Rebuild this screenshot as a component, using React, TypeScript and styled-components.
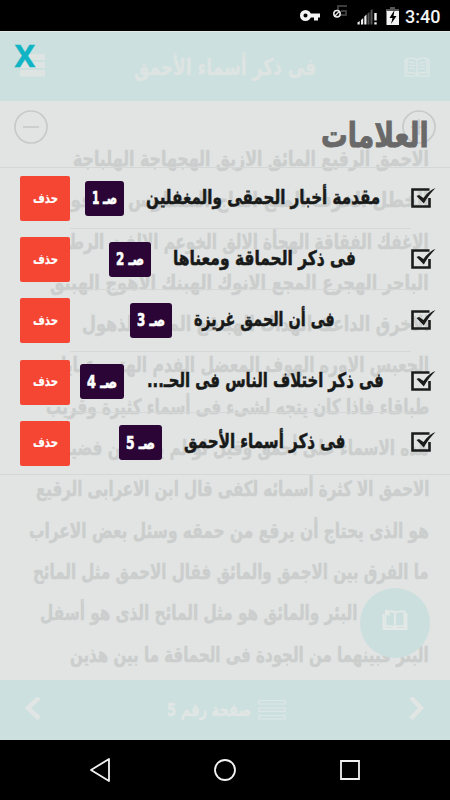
import React, { useLayoutEffect, useRef } from "react";
import styled, { createGlobalStyle } from "styled-components";

const GlobalStyle = createGlobalStyle`
  * { box-sizing: border-box; }
  body { margin: 0; background: #000; }
`;

const arabic = `"DejaVu Sans Condensed", "DejaVu Sans", sans-serif`;

const Screen = styled.div`
  position: relative;
  display: flex;
  flex-direction: column;
  width: 450px;
  height: 800px;
  overflow: hidden;
  background: #000;
  font-family: ${arabic};
  font-weight: 700;
`;

const StatusBar = styled.header`
  display: flex;
  justify-content: flex-end;
  height: 31px;
  flex: none;
`;

const Clock = styled.span`
  width: 35px;
  margin: 5px 10px 0 3px;
  color: #f4f4f4;
  font: 500 18px/23px Roboto, sans-serif;
  white-space: nowrap;
`;

const AppBar = styled.div`
  display: flex;
  align-items: center;
  justify-content: space-between;
  flex: none;
  height: 70px;
  padding: 0 20px;
  border-top: 1px solid #dfe9e8;
  background: #cce0df;
`;

const Article = styled.main`
  direction: rtl;
  flex: none;
  height: 579px;
  padding: 38px 21px 0;
  overflow: hidden;
  background: #e1e4e3;
`;

const Line = styled.div<{ $indent?: number }>`
  height: 41.3px;
  padding-right: ${(p) => p.$indent ?? 0}px;
`;

const PagerBar = styled.footer`
  display: flex;
  align-items: center;
  justify-content: space-between;
  flex: none;
  height: 60px;
  padding: 0 25px;
  background: #cce0df;
`;

const PageLabel = styled.div`
  display: flex;
  align-items: center;
  gap: 7px;
  margin-left: 2px;
`;

const NavBar = styled.nav`
  display: flex;
  align-items: center;
  justify-content: space-between;
  height: 60px;
  padding: 0 89px;
`;

const TextBox = styled.div<{ $w: number; $size: number; $line: number; $color: string; $heavy: number }>`
  direction: rtl;
  flex: none;
  width: ${(p) => p.$w}px;
  height: ${(p) => p.$line}px;
  color: ${(p) => p.$color};
  font-size: ${(p) => p.$size}px;
  line-height: ${(p) => p.$line}px;
  white-space: nowrap;
  -webkit-text-stroke: ${(p) => p.$heavy}px ${(p) => p.$color};
`;

const Stretch = styled.span`
  display: inline-block;
  transform-origin: right center;
`;

type FitProps = {
  w: number;
  size: number;
  line: number;
  color: string;
  heavy?: number;
  children: React.ReactNode;
};

/* Justifies a single line of joined script to the width of its box. */
function Fit({ w, size, line, color, heavy = 0.5, children }: FitProps) {
  const ref = useRef<HTMLSpanElement>(null);
  useLayoutEffect(() => {
    const el = ref.current;
    if (el && el.offsetWidth) el.style.transform = `scaleX(${w / el.offsetWidth})`;
  }, [w, children]);
  return (
    <TextBox $w={w} $size={size} $line={line} $color={color} $heavy={heavy}>
      <Stretch ref={ref}>{children}</Stretch>
    </TextBox>
  );
}

const FloatingButton = styled.div`
  position: absolute;
  left: 360px;
  top: 588px;
  display: grid;
  place-items: center;
  width: 70px;
  height: 70px;
  padding-bottom: 6px;
  border-radius: 50%;
  background: #cbe0de;
`;

const ZoomControls = styled.div`
  position: absolute;
  top: 110px;
  left: 14px;
  right: 14px;
  display: flex;
  justify-content: space-between;
`;

const Panel = styled.section`
  position: absolute;
  top: 32px;
  left: 0;
  right: 0;
  height: 708px;
`;

const Close = styled.div`
  height: 70px;
  padding: 1px 0 0 14.5px;
  color: #10b4c4;
  font: 700 31px/44px "Noto Sans", sans-serif;
  -webkit-text-stroke: 0.4px #10b4c4;
`;

const Heading = styled.div`
  display: flex;
  justify-content: flex-end;
  height: 66px;
  padding: 12px 21px 0 0;
  border-bottom: 1px solid #d3d7d6;
`;

const List = styled.div`
  direction: rtl;
  border-bottom: 1px solid #d3d7d6;
`;

const Row = styled.div`
  display: flex;
  align-items: center;
  height: 61.2px;
  padding: 0 14px 0 20px;
`;

const Caption = styled.div<{ $start: number; $divider: boolean }>`
  display: flex;
  align-items: center;
  align-self: stretch;
  flex: 1;
  padding: 0 ${(p) => p.$start}px 3px 0;
  border-bottom: 1px solid ${(p) => (p.$divider ? "#d5d8d7" : "transparent")};
`;

const Badge = styled.div<{ $w: number; $gap: number }>`
  display: grid;
  place-items: center;
  width: ${(p) => p.$w}px;
  height: 35px;
  margin: 3px ${(p) => p.$gap}px 0 0;
  border-radius: 3px;
  background: #2a0536;
`;

const Delete = styled.div`
  display: grid;
  place-items: center;
  width: 50px;
  height: 45px;
  padding-bottom: 2px;
  border-radius: 2px;
  background: #f54634;
`;

const lines = [
  { t: "الاحمق الرقيع المائق الازبق الهجهاجة الهلباجة", l: 73 },
  { t: "الخطل الخرف الملغ الماج المسلوس المأفون", l: 56 },
  { t: "الاغفك الفقاقة الهجأة الالق الخوعم الالفت الرطئ", l: 56 },
  { t: "الباحر الهجرع المجع الانوك الهبنك الاهوج الهبنق", l: 50 },
  { t: "الاخرق الداعك الهداك الهبنقع المدله الذهول", l: 82 },
  { t: "الجعبس الاوره الهوف المعضل الفدم الهتور عياياء", l: 53 },
  { t: "طباقاء فاذا كان يتجه لشىء فى أسماء كثيرة وقريب", l: 46 },
  { t: "هذه الاسماء على أحمق وقيل لو لم يكن من فضيلة", l: 56 },
  { t: "الاحمق الا كثرة أسمائه لكفى قال ابن الاعرابى الرقيع", l: 36 },
  { t: "هو الذى يحتاج أن يرقع من حمقه وسئل بعض الاعراب", l: 29 },
  { t: "ما الفرق بين الاجمق والمائق فقال الاحمق مثل المائح", l: 33 },
  { t: "البئر والمائق هو مثل المائح الذى هو أسفل", l: 40, indent: 72 },
  { t: "البئر فبينهما من الجودة فى الحماقة ما بين هذين", l: 70 },
];

const marks = [
  { t: "مقدمة أخبار الحمقى والمغفلين", n: 1, l: 146, r: 380, bl: 85, bw: 39 },
  { t: "فى ذكر الحماقة ومعناها", n: 2, l: 173, r: 356, bl: 109, bw: 42 },
  { t: "فى أن الحمق غريزة", n: 3, l: 194, r: 335, bl: 130, bw: 42 },
  { t: "فى ذكر اختلاف الناس فى الحـ...", n: 4, l: 147, r: 384, bl: 80, bw: 44 },
  { t: "فى ذكر أسماء الأحمق", n: 5, l: 184, r: 345, bl: 119, bw: 43 },
];

const StatusIcons = () => (
  <svg width="104" height="31" viewBox="296 0 104 31">
    <circle cx="303.500" cy="15.500" r="3.800" fill="none" stroke="#f4f4f4" strokeWidth="3.500" />
    <path fill="#f4f4f4" d="M308 13.600h10v4h-2v3h-4v-3h-4z" />
    <path fill="none" stroke="#3c3c3c" strokeWidth="2" d="M345 6h-9v9h8v-4h-5" />
    <circle cx="335" cy="13.700" r="3.200" fill="#000" stroke="#eee" strokeWidth="1.500" />
    <path stroke="#eee" strokeWidth="1.300" d="m333 16 4.300-4.600" />
    <path fill="#f0f0f0" d="M355.500 24.500v-2l2.200-1.500v3.500zM359 24.500V20l2.200-2v6.500zM362.300 24.500V16.500l2.200-2v10z" />
    <path fill="#555" d="M365.500 24.500V13.500l2-1.500v12.500zM368.500 24.500V10.500l2-1.500v15.500z" />
    <path fill="#f0f0f0" d="M372.300 13h2.400v7.500h-2.400zM372.300 22.200h2.400v2.400h-2.400z" />
    <path fill="#555" d="M388 7h5v2h4v3h-13V9h4z" />
    <path fill="#f4f4f4" d="M384.500 11h12.500v14h-12.500z" />
    <path fill="#000" d="m392.500 10-5 8h3l-1.500 6 5.500-8h-3z" />
  </svg>
);

const BookOutline = () => (
  <svg width="26" height="20" viewBox="0 0 26 20" fill="none" stroke="#dfe7e6" strokeWidth="1.200">
    <path d="M3 3H1v16h24V3h-2M13 3v14M3 1.500c4-.8 8-.3 10 1.500 2-1.800 6-2.300 10-1.500V16c-4-.8-8-.3-10 1.500C11 15.700 7 15.200 3 16zM5 5l6 1M5 8l6 1M5 11l6 1M15 6l6-1M15 9l6-1M15 12l6-1" />
  </svg>
);

const Menu = () => (
  <svg width="26" height="25" viewBox="0 0 26 25" fill="#dde4e2">
    <path d="M0 0h25v6H0zM0 8h25v6H0zM0 16h25v6.500H0z" />
  </svg>
);

const Chevron = ({ flip }: { flip?: boolean }) => (
  <svg width="16" height="26" viewBox="0 0 16 26" fill="none" stroke="#e1e6e4" strokeWidth="4.500">
    <path d={flip ? "m2 .500 10 10.500L2 21.500" : "M14 .500 3 11l11 10.500"} />
  </svg>
);

const ListOutline = () => (
  <svg width="28" height="22" viewBox="0 0 28 22" fill="none" stroke="#dee7e5" strokeWidth="1.200">
    <path d="M1 1.500h26v3.500H1zM1 9h26v3.500H1zM1 16.500h26V20H1z" />
  </svg>
);

const Round = ({ plus }: { plus?: boolean }) => (
  <svg width="34" height="34" viewBox="0 0 34 34" fill="none" stroke="#c7caca" strokeWidth="1.700">
    <circle cx="17" cy="17" r="16" />
    <path d={plus ? "M9 17h16M17 9v16" : "M9 17h16"} />
  </svg>
);

const Check = () => (
  <svg width="25" height="22" viewBox="0 0 25 22">
    <path d="M18.500 1.500H1.500v17h17V10" fill="none" stroke="#1b1b1b" strokeWidth="2.600" />
    <path d="m5.500 8 2.500-1 4.500 3C16 5 20 1.500 24.500 0 20 4.500 16.500 9 12.800 15.500Z" fill="#1b1b1b" />
  </svg>
);

export default function App() {
  return (
    <Screen>
      <GlobalStyle />
      <StatusBar>
        <StatusIcons />
        <Clock>3:40</Clock>
      </StatusBar>
      <AppBar>
        <Menu />
        <Fit w={182} size={23} line={46} color="#dde4e2">فى ذكر أسماء الأحمق</Fit>
        <BookOutline />
      </AppBar>
      <Article>
        {lines.map((x) => (
          <Line key={x.t} $indent={x.indent}>
            <Fit w={429 - (x.indent ?? 0) - x.l} size={21} line={41.3} color="#cbcecd" heavy={0.4}>{x.t}</Fit>
          </Line>
        ))}
      </Article>
      <PagerBar>
        <Chevron />
        <PageLabel>
          <Fit w={84} size={18} line={34} color="#e0e6e4">صفحة رقم 5</Fit>
          <ListOutline />
        </PageLabel>
        <Chevron flip />
      </PagerBar>
      <NavBar>
        <svg width="22" height="26" viewBox="0 0 22 26" fill="none" stroke="#f2f2f2" strokeWidth="1.800" strokeLinejoin="round">
          <path d="M2 13 20 2v22z" />
        </svg>
        <svg width="24" height="24" viewBox="0 0 24 24" fill="none" stroke="#f2f2f2" strokeWidth="1.800">
          <circle cx="12" cy="12" r="10" />
        </svg>
        <svg width="22" height="22" viewBox="0 0 22 22" fill="none" stroke="#f2f2f2" strokeWidth="1.800">
          <path d="M2 2h18v18H2z" />
        </svg>
      </NavBar>

      <ZoomControls>
        <Round />
        <Round plus />
      </ZoomControls>
      <FloatingButton>
        <svg width="26" height="22" viewBox="0 0 26 22" fill="none" stroke="#e4e9e7" strokeWidth="1.800">
          <path d="M8 2.500c2-.5 4 0 5 1.500 2-2 5-2 9.500-1.500v15c-4-.5-7.500-.5-9.500 1-2-1.500-5-1.500-9.500-1V7M1.500 5v15h23V4M13 4v14" />
          <path d="M3 1h4.500v6.500L5.200 5.500 3 7.500z" fill="#e4e9e7" stroke="none" />
        </svg>
      </FloatingButton>

      <Panel>
        <Close>X</Close>
        <Heading>
          <Fit w={108} size={34} line={42} color="#686968" heavy={0.8}>العلامات</Fit>
        </Heading>
        <List>
          {marks.map((m) => (
            <Row key={m.n}>
              <Check />
              <Caption $start={411 - m.r} $divider={m.n < 5}>
                <Fit w={m.r - m.l} size={20} line={44} color="#181a19">{m.t}</Fit>
                <Badge $w={m.bw} $gap={m.l - m.bl - m.bw}>
                  <Fit w={m.bw - 14} size={17} line={32} color="#fff" heavy={0.6}>صـ {m.n}</Fit>
                </Badge>
              </Caption>
              <Delete>
                <Fit w={25} size={14} line={26} color="#fff" heavy={0.2}>حذف</Fit>
              </Delete>
            </Row>
          ))}
        </List>
      </Panel>
    </Screen>
  );
}
